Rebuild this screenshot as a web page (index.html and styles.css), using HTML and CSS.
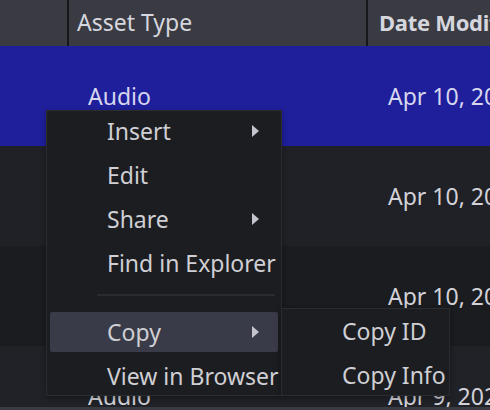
FILE: index.html
```html
<!DOCTYPE html>
<html>
<head>
<meta charset="utf-8">
<link rel="stylesheet" href="styles.css">
</head>
<body>
<div class="table">
  <div class="header">
    <div class="hcell first"></div>
    <div class="hcell type">Asset Type</div>
    <div class="hcell date">Date Modified</div>
  </div>
  <div class="row sel"><div class="c0"></div><div class="c1">Audio</div><div class="c2">Apr 10, 2024</div></div>
  <div class="row r2"><div class="c0"></div><div class="c1">Audio</div><div class="c2">Apr 10, 2024</div></div>
  <div class="row r3"><div class="c0"></div><div class="c1">Audio</div><div class="c2">Apr 10, 2024</div></div>
  <div class="row r4"><div class="c0"></div><div class="c1">Audio</div><div class="c2">Apr 9, 2024</div></div>
</div>

<div class="menu main">
  <div class="item first"><span>Insert</span><i class="arrow"></i></div>
  <div class="item"><span>Edit</span></div>
  <div class="item"><span>Share</span><i class="arrow"></i></div>
  <div class="item"><span>Find in Explorer</span></div>
  <div class="sep"></div>
  <div class="item active"><span>Copy</span><i class="arrow"></i></div>
  <div class="item"><span>View in Browser</span></div>
</div>

<div class="menu sub">
  <div class="item"><span>Copy ID</span></div>
  <div class="item"><span>Copy Info</span></div>
</div>
</body>
</html>
```

FILE: styles.css
```css
html, body {
  margin: 0;
  padding: 0;
  width: 490px;
  height: 410px;
  overflow: hidden;
  background: #1c1d21;
  font-family: "Noto Sans", "Open Sans", sans-serif;
  font-size: 23px;
  color: #d2d2d8;
}

.table {
  width: 490px;
  height: 410px;
  border-bottom: 3px solid #3a3b42;
  box-sizing: border-box;
  overflow: hidden;
}

.header {
  display: grid;
  grid-template-columns: 69px 299px 1fr;
  height: 46px;
  background: #3a3b42;
}

.hcell {
  display: flex;
  align-items: center;
  white-space: nowrap;
  overflow: hidden;
  color: #d6d6de;
  padding-bottom: 2px;
}

.hcell.first {
  border-right: 2px solid #16171a;
}

.hcell.type {
  padding-left: 8px;
  border-right: 2px solid #16171a;
}

.hcell.date {
  padding-left: 11px;
  font-weight: 700;
  font-size: 22px;
  letter-spacing: -0.3px;
}

.row {
  display: grid;
  grid-template-columns: 69px 299px 1fr;
  height: 100px;
  align-items: center;
  white-space: nowrap;
}

.row .c1 { padding-left: 19px; }
.row .c2 { padding-left: 20px; overflow: hidden; }

.row.sel { background: #1f1f9c; color: #d6d6ee; }
.row.r2 { background: #202126; }
.row.r3 { background: #1b1c20; }
.row.r4 { background: #212228; }

.menu {
  position: absolute;
  background: #1c1d21;
  border: 1px solid #2b2c31;
  box-sizing: border-box;
  box-shadow: 0 2px 6px rgba(0, 0, 0, 0.35);
}

.menu.main {
  left: 46px;
  top: 110px;
  width: 236px;
  height: 286px;
}

.menu.sub {
  left: 281px;
  top: 308px;
  width: 169px;
  height: 88px;
}

.item {
  position: relative;
  height: 44px;
  display: flex;
  align-items: center;
  padding-left: 60px;
  color: #cfcfd4;
  white-space: nowrap;
}

.item.first {
  margin-top: -2px;
}

.item.active::before {
  content: "";
  position: absolute;
  left: 3px;
  right: 3px;
  top: 2px;
  bottom: 2px;
  background: #3a3b48;
  border-radius: 2px;
  z-index: 0;
}

.item span {
  position: relative;
  z-index: 1;
}

.arrow {
  position: absolute;
  left: 205px;
  top: 16px;
  width: 0;
  height: 0;
  border-top: 6px solid transparent;
  border-bottom: 6px solid transparent;
  border-left: 7px solid #c4c4cc;
  z-index: 1;
}

.sep {
  height: 25px;
  position: relative;
}

.sep::after {
  content: "";
  position: absolute;
  left: 50px;
  right: 6px;
  top: 9px;
  height: 2px;
  background: #2a2b30;
}
```
